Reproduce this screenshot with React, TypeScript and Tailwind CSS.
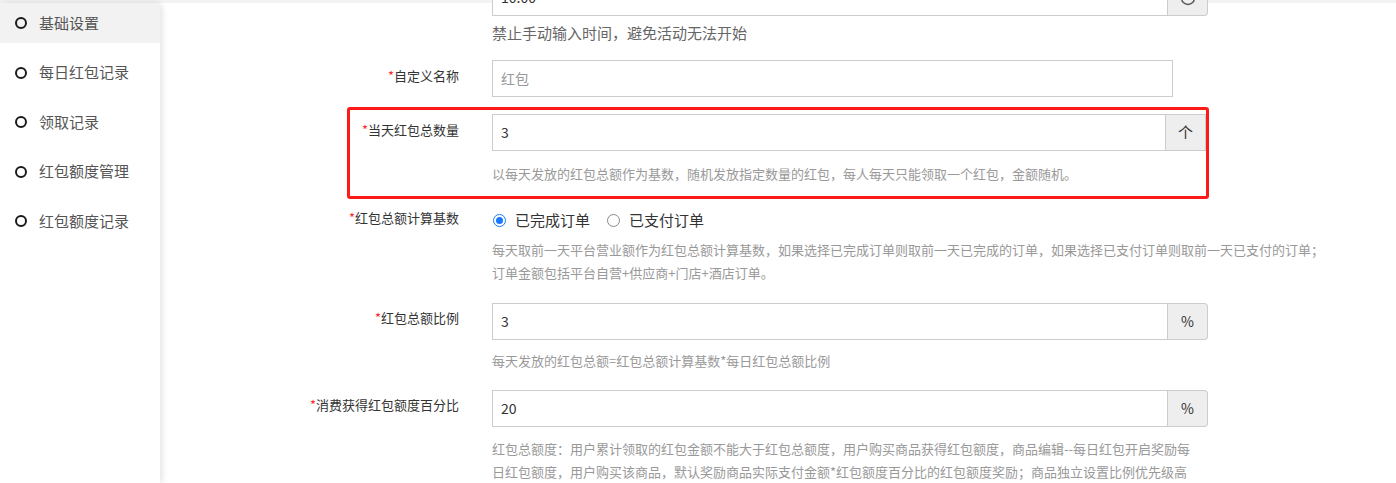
const menu = ["基础设置", "每日红包记录", "领取记录", "红包额度管理", "红包额度记录"];

const Label = ({ text, pt = "pt-[6px]" }: { text: string; pt?: string }) => (
  <div className={`w-[299px] shrink-0 text-right text-[13px] leading-[20px] text-[#333] ${pt}`}>
    <span className="text-[#ff2a2a]">*</span>
    {text}
  </div>
);

const InputBox = ({
  value,
  placeholder,
  addon,
  width,
  roundAddon = true,
}: {
  value?: string;
  placeholder?: string;
  addon?: React.ReactNode;
  width: string;
  roundAddon?: boolean;
}) => (
  <div className={`flex h-[37px] ${width}`}>
    <div className="flex flex-1 items-center border border-[#cccccc] bg-white pl-[8px] text-[14px] text-[#333]">
      {value ? value : <span className="text-[#999]">{placeholder}</span>}
    </div>
    {addon && (
      <div
        className={`flex w-[40px] items-center justify-center border border-l-0 border-[#cccccc] bg-[#eeeeee] text-[14px] text-[#333] ${
          roundAddon ? "rounded-r-[4px]" : ""
        }`}
      >
        {addon}
      </div>
    )}
  </div>
);

const Help = ({ children, cls }: { children: React.ReactNode; cls: string }) => (
  <div className={`whitespace-nowrap text-[13px] text-[#999] ${cls}`}>{children}</div>
);

export default function App() {
  return (
    <div
      className="flex h-[483px] overflow-hidden bg-[#f3f3f3] pt-[3px]"
      style={{ fontFamily: "'Noto Sans CJK SC', 'Noto Sans', sans-serif" }}
    >
      <aside className="relative z-10 w-[160px] shrink-0 rounded-tr-[6px] bg-white shadow-[2px_0_6px_rgba(0,0,0,0.12)]">
        <ul className="flex flex-col gap-[9.5px]">
          {menu.map((m, i) => (
            <li
              key={m}
              className={`flex h-[40px] items-center text-[15px] text-[#555] ${i === 0 ? "bg-[#f2f2f2]" : ""}`}
            >
              <span className="ml-[15px] mr-[12px] h-[12px] w-[12px] rounded-full border-2 border-[#1a1a1a]" />
              {m}
            </li>
          ))}
        </ul>
      </aside>

      <main className="flex-1 bg-white">
        {/* 开始时间 */}
        <div className="mt-[-24px] flex">
          <div className="w-[299px] shrink-0" />
          <div className="ml-[33px]">
            <InputBox
              width="w-[716px]"
              value="10:00"
              addon={
                <svg width="16" height="16" viewBox="0 0 16 16">
                  <circle cx="8" cy="8" r="6.5" fill="none" stroke="#555" strokeWidth="1.4" />
                  <path d="M8 4.5V8l2.5 1.5" fill="none" stroke="#555" strokeWidth="1.4" />
                </svg>
              }
            />
            <div className="mt-[7px] text-[15px] leading-[20px] text-[#666]">禁止手动输入时间，避免活动无法开始</div>
          </div>
        </div>

        {/* 自定义名称 */}
        <div className="mt-[17px] flex">
          <Label text="自定义名称" />
          <div className="ml-[33px]">
            <InputBox width="w-[681px]" placeholder="红包" />
          </div>
        </div>

        {/* 当天红包总数量 */}
        <div className="relative mt-[17px] flex">
          <Label text="当天红包总数量" />
          <div className="ml-[33px]">
            <InputBox width="w-[714px]" value="3" addon={<span className="text-[15px]">个</span>} roundAddon={false} />
            <Help cls="mt-[13px] leading-[20px]">
              以每天发放的红包总额作为基数，随机发放指定数量的红包，每人每天只能领取一个红包，金额随机。
            </Help>
          </div>
          <div className="pointer-events-none absolute left-[187px] top-[-7px] h-[92px] w-[862px] rounded-[3px] border-[3px] border-[#ff1a1a]" />
        </div>

        {/* 红包总额计算基数 */}
        <div className="mt-[26px] flex">
          <Label text="红包总额计算基数" pt="-mt-[2px]" />
          <div className="ml-[33px]">
            <div className="flex h-[20px] items-center text-[15px] text-[#333]">
              <span className="ml-[1px] flex h-[13px] w-[13px] items-center justify-center rounded-full border border-[#1677ff]">
                <span className="h-[7px] w-[7px] rounded-full bg-[#1677ff]" />
              </span>
              <span className="ml-[9px]">已完成订单</span>
              <span className="ml-[17px] h-[13px] w-[13px] rounded-full border border-[#888]" />
              <span className="ml-[9px]">已支付订单</span>
            </div>
            <Help cls="mt-[8px] leading-[23px]">
              每天取前一天平台营业额作为红包总额计算基数，如果选择已完成订单则取前一天已完成的订单，如果选择已支付订单则取前一天已支付的订单；
              <br />
              订单金额包括平台自营+供应商+门店+酒店订单。
            </Help>
          </div>
        </div>

        {/* 红包总额比例 */}
        <div className="mt-[19px] flex">
          <Label text="红包总额比例" pt="pt-[5px]" />
          <div className="ml-[33px]">
            <InputBox width="w-[716px]" value="3" addon="%" />
            <Help cls="mt-[11px] leading-[20px]">每天发放的红包总额=红包总额计算基数*每日红包总额比例</Help>
          </div>
        </div>

        {/* 消费获得红包额度百分比 */}
        <div className="mt-[19px] flex">
          <Label text="消费获得红包额度百分比" pt="pt-[5px]" />
          <div className="ml-[33px]">
            <InputBox width="w-[716px]" value="20" addon="%" />
            <Help cls="mt-[10px] leading-[23px]">
              红包总额度：用户累计领取的红包金额不能大于红包总额度，用户购买商品获得红包额度，商品编辑--每日红包开启奖励每
              <br />
              日红包额度，用户购买该商品，默认奖励商品实际支付金额*红包额度百分比的红包额度奖励；商品独立设置比例优先级高
            </Help>
          </div>
        </div>
      </main>
    </div>
  );
}
